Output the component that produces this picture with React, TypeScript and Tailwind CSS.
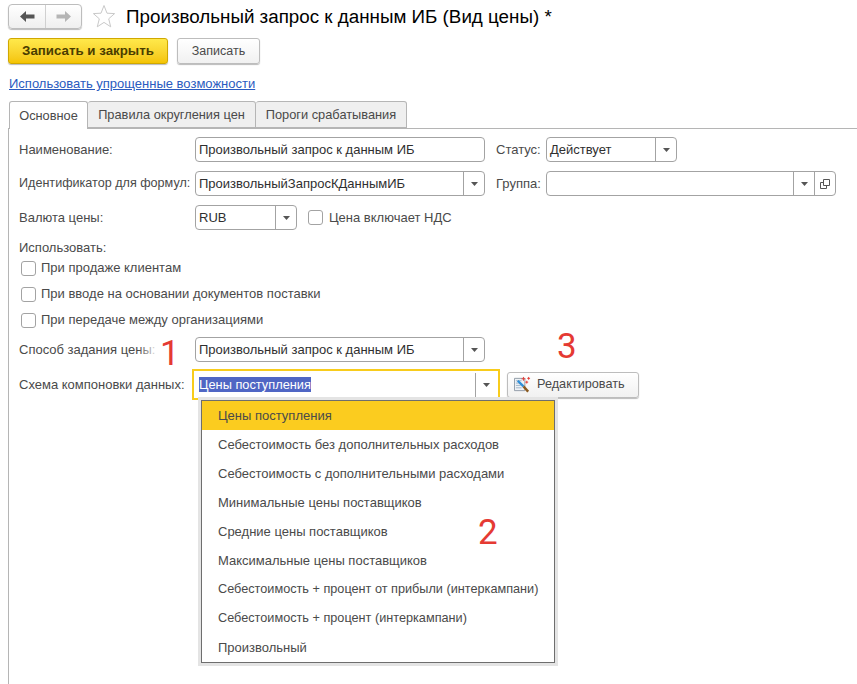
const Caret = () => (
  <svg width="7" height="4" viewBox="0 0 7 4" className="block">
    <path d="M0 0h7L3.5 4z" fill="#555" />
  </svg>
);

const DropButton = () => (
  <div className="w-[21px] h-full shrink-0 border-l border-[#a3a3a3] flex items-center justify-center">
    <Caret />
  </div>
);

const Field = ({ text, width, drop }: { text?: string; width: string; drop?: boolean }) => (
  <div className={`${width} h-[25px] shrink-0 border border-[#a3a3a3] rounded-[4px] bg-white flex items-center`}>
    <span className="flex-1 pl-[3px] text-[#2f2f2f] truncate">{text}</span>
    {drop && <DropButton />}
  </div>
);

const Check = ({ label }: { label: string }) => (
  <div className="h-[26px] flex items-center gap-[5px] pl-[2px]">
    <div className="w-[15px] h-[15px] border border-[#a3a3a3] rounded-[3px] bg-white" />
    <span>{label}</span>
  </div>
);

const Label = ({ text }: { text: string }) => <div className="w-[176px] shrink-0 whitespace-nowrap">{text}</div>;

const items = [
  { text: "Цены поступления" },
  { text: "Себестоимость без дополнительных расходов" },
  { text: "Себестоимость с дополнительными расходами" },
  { text: "Минимальные цены поставщиков" },
  { text: "Средние цены поставщиков" },
  { text: "Максимальные цены поставщиков" },
  { text: "Себестоимость + процент от прибыли (интеркампани)", narrow: true },
  { text: "Себестоимость + процент (интеркампани)", narrow: true },
  { text: "Произвольный" },
];

const Mark = ({ n, className }: { n: string; className: string }) => (
  <span className={`absolute text-[35px] leading-none text-[#e53a33] font-['Roboto',sans-serif] ${className}`}>{n}</span>
);

export default function App() {
  return (
    <div className="relative w-[857px] h-[684px] overflow-hidden bg-white font-['Liberation_Sans',Arial,sans-serif] text-[13px] text-[#4a4a4a]">
      {/* Header */}
      <div className="flex items-center h-[24px] mt-[4px] ml-[8px]">
        <div className="flex w-[74px] h-[25px] border border-[#bdbdbd] rounded-[4px] bg-gradient-to-b from-white to-[#efefef] shadow-[0_1px_1px_#bbb]">
          <div className="w-[37px] border-r border-[#d0d0d0] flex items-center justify-center">
            <svg width="15" height="11" viewBox="0 0 15 11">
              <path d="M0 5.5 6 0v3.500h8.500v4H6V11z" fill="#555" />
            </svg>
          </div>
          <div className="flex-1 flex items-center justify-center">
            <svg width="15" height="11" viewBox="0 0 15 11">
              <path d="M15 5.5 9 0v3.500H.5v4H9V11z" fill="#b5b5b5" />
            </svg>
          </div>
        </div>
        <svg width="24" height="24" viewBox="0 0 24 24" fill="#fff" stroke="#c9c9c9" className="ml-[10px] mr-[10px]">
          <path d="M12 1.500 15 9.200l7.600.4-5.900 5.200 2 8-6.700-4.400-6.700 4.400 2-8L1.400 9.600l7.600-.4z" />
        </svg>
        <span className="text-[18.8px] text-black whitespace-nowrap pt-[2px]">Произвольный запрос к данным ИБ (Вид цены) *</span>
      </div>

      {/* Command bar */}
      <div className="flex gap-[9px] mt-[10px] ml-[8px]">
        <button className="w-[160px] h-[26px] rounded-[3px] border border-[#d0a800] bg-gradient-to-b from-[#ffe94a] to-[#f4c400] font-bold text-[#4a3d00] text-[13.3px] shadow-[0_1px_1px_#bbb]">
          Записать и закрыть
        </button>
        <button className="w-[83px] h-[26px] rounded-[3px] border border-[#bdbdbd] bg-gradient-to-b from-white to-[#f1f1f1] text-[#4a4a4a] text-[12.5px] shadow-[0_1px_1px_#bbb]">
          Записать
        </button>
      </div>

      <div className="mt-[12px] ml-[9px] h-[16px] leading-[16px] text-[#2a5bc0] underline">Использовать упрощенные возможности</div>

      {/* Tabs */}
      <div className="flex mt-[9px] ml-[9px] h-[28px] relative z-10 text-[12.8px]">
        <div className="w-[79px] h-[28px] border border-b-0 border-[#b5b5b5] rounded-t-[3px] bg-white flex items-center justify-center">Основное</div>
        <div className="w-[168px] h-[27px] border border-l-0 border-[#b5b5b5] rounded-t-[3px] bg-[#efefef] flex items-center justify-center">Правила округления цен</div>
        <div className="w-[151px] h-[27px] border border-l-0 border-[#b5b5b5] rounded-t-[3px] bg-[#efefef] flex items-center justify-center">Пороги срабатывания</div>
      </div>

      {/* Form panel */}
      <div className="ml-[8px] h-[557px] -mt-px border-l border-t border-[#b5b5b5] pt-[8px] pl-[10px]">
        <div className="flex items-center h-[25px]">
          <Label text="Наименование:" />
          <Field text="Произвольный запрос к данным ИБ" width="w-[290px]" />
          <span className="ml-[11px] w-[50px]">Статус:</span>
          <Field text="Действует" width="w-[131px]" drop />
        </div>
        <div className="flex items-center h-[25px] mt-[9px]">
          <div className="w-[176px] shrink-0 whitespace-nowrap text-[12.6px]">Идентификатор для формул:</div>
          <Field text="ПроизвольныйЗапросКДаннымИБ" width="w-[290px]" drop />
          <span className="ml-[11px] w-[50px]">Группа:</span>
          <div className="w-[290px] h-[25px] shrink-0 border border-[#a3a3a3] rounded-[4px] flex justify-end">
            <DropButton />
            <div className="w-[21px] h-full shrink-0 border-l border-[#a3a3a3] flex items-center justify-center">
              <svg width="10" height="10" viewBox="0 0 10 10" fill="none" stroke="#555">
                <path d="M3.500 .5h6v6h-6z" />
                <path d="M3.500 3.500H.5v6h6V7" />
              </svg>
            </div>
          </div>
        </div>
        <div className="flex items-center h-[25px] mt-[9px]">
          <Label text="Валюта цены:" />
          <Field text="RUB" width="w-[102px]" drop />
          <div className="ml-[11px] w-[15px] h-[15px] border border-[#a3a3a3] rounded-[3px]" />
          <span className="ml-[6px]">Цена включает НДС</span>
        </div>
        <div className="h-[16px] leading-[16px] mt-[10px]">Использовать:</div>
        <div className="-mt-px">
          <Check label="При продаже клиентам" />
          <Check label="При вводе на основании документов поставки" />
          <Check label="При передаче между организациями" />
        </div>
        <div className="flex items-center h-[25px] mt-[4px]">
          <Label text="Способ задания цены:" />
          <Field text="Произвольный запрос к данным ИБ" width="w-[290px]" drop />
        </div>
        <div className="flex items-center h-[31px] mt-[7px]">
          <div className="w-[173px] shrink-0 whitespace-nowrap">Схема компоновки данных:</div>
          <div className="w-[308px] h-[31px] shrink-0 border-2 border-[#f8cc1c] flex items-center">
            <span className="flex-1 pl-[5px]">
              <span className="bg-[#4f66c4] text-white text-[12.8px] inline-block leading-[15px]">Цены поступления</span>
            </span>
            <div className="w-[21px] h-[24px] shrink-0 border-l border-[#a3a3a3] flex items-center justify-center mr-[2px]">
              <Caret />
            </div>
          </div>
          <button className="ml-[7px] w-[132px] h-[26px] rounded-[3px] border border-[#bdbdbd] bg-gradient-to-b from-white to-[#f1f1f1] text-[#4a4a4a] text-[12.7px] shadow-[0_1px_1px_#bbb] flex items-center gap-[6px] pl-[6px]">
            <svg width="17" height="17" viewBox="0 0 18 18" className="shrink-0">
              <path d="M.5 2.500h11v13H.5z" fill="#eef2f6" stroke="#8f9aa6" />
              <path d="M2 5h6M2 7.500h5M2 10h5M2 12.500h6" stroke="#9fb4c8" />
              <path d="M4 5l6 6" stroke="#2f8fd8" strokeWidth="2.500" />
              <path d="M10 11l5 5.500" stroke="#8a5a20" strokeWidth="2.500" />
              <path d="M8 3h4M10 1v4M14 2.500h3M15.500 1v3M12 6.500h3M13.500 5v3" stroke="#e53a33" />
            </svg>
            <span className="pt-px">Редактировать</span>
          </button>
        </div>
      </div>

      {/* Dropdown list */}
      <div className="absolute left-[201px] top-[400px] w-[354px] h-[263px] bg-white border border-[#6e6e6e] shadow-[0_0_0_3px_#e4e4e4]">
        {items.map((item, i) => (
          <div
            key={item.text}
            className={`h-[29px] flex items-center pl-[16px] ${i === 0 ? "bg-[#fbcc1f]" : ""} ${item.narrow ? "text-[12.7px]" : ""}`}
          >
            {item.text}
          </div>
        ))}
      </div>

      {/* Faded end of the label under the annotation */}
      <div className="absolute left-[138px] top-[340px] w-[18px] h-[18px] bg-gradient-to-r from-transparent to-white/85" />

      <Mark n="1" className="left-[160px] top-[336px]" />
      <Mark n="2" className="left-[478px] top-[515px]" />
      <Mark n="3" className="left-[557px] top-[329px]" />
    </div>
  );
}
